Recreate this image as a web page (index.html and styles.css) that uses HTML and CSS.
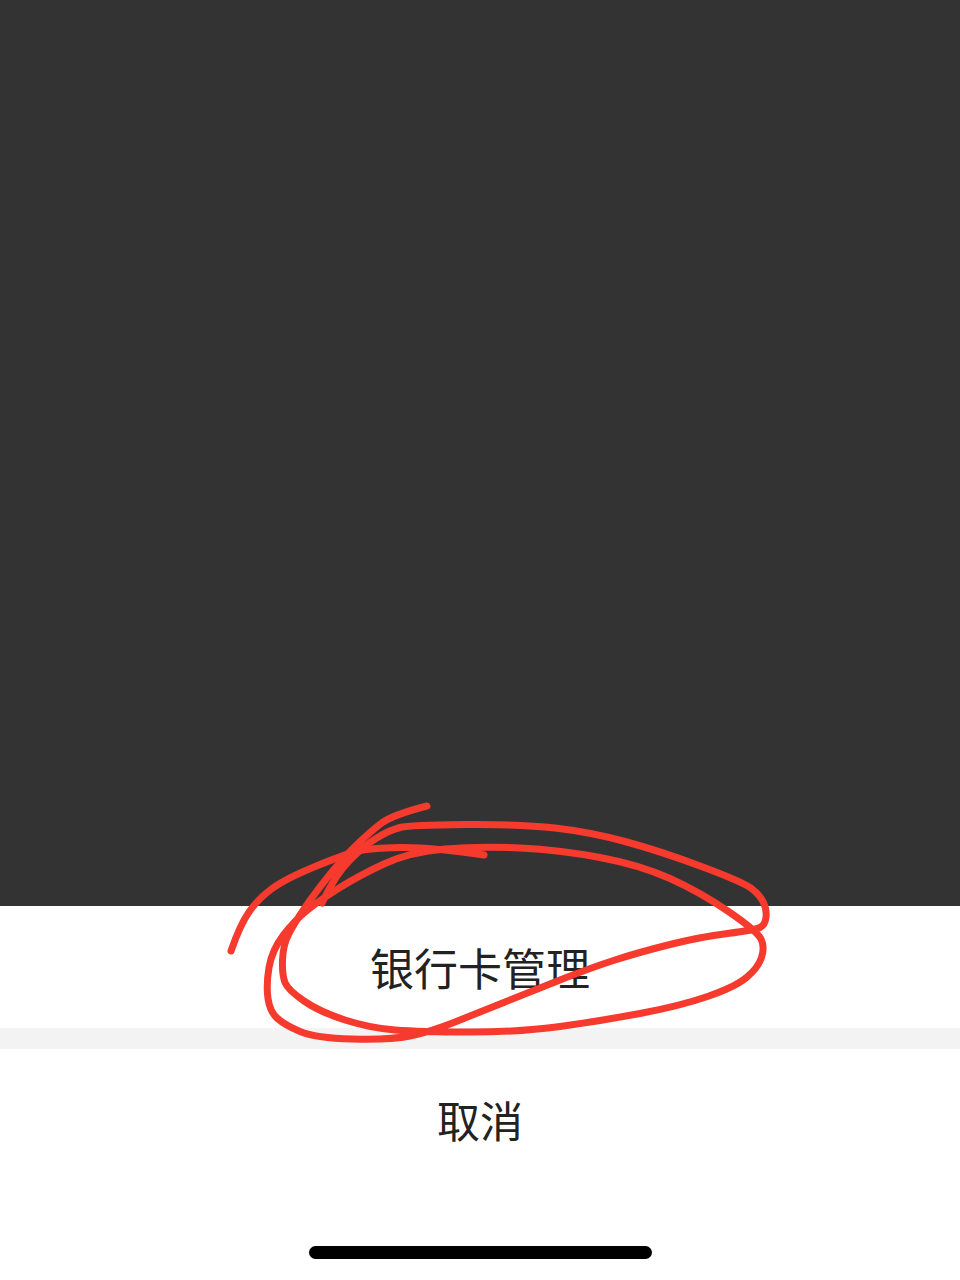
FILE: index.html
```html
<!DOCTYPE html>
<html lang="zh-CN">
<head>
    <meta charset="UTF-8">
    <meta name="viewport" content="width=device-width, initial-scale=1.0">
    <title>银行卡管理</title>
    <link rel="stylesheet" href="styles.css">
</head>
<body>
    <div class="page">
        <div class="backdrop"></div>
        <div class="sheet">
            <div class="sheet_item">银行卡管理</div>
            <div class="sheet_gap"></div>
            <div class="sheet_cancel">取消</div>
            <div class="home_bar"></div>
        </div>

        <!-- red scribble drawn over the screenshot -->
        <svg class="scribble" viewBox="0 0 960 1280" width="960" height="1280">
            <path d="M231 951 Q240 925 249 912 Q258 899 271.5 889 Q285 879 314 867 Q343 855 356.5 851.5 Q370 848 400 847.5 Q430 847 484 855"/>
            <path d="M427 806 Q392 815 381 823.5 Q370 832 356.5 845 Q343 858 329 875.5 Q315 893 305 907.5 Q295 922 289 933.5 Q283 945 282.5 960 Q282 975 285 982.5 Q288 990 304 1001 Q320 1012 345 1020 Q370 1028 395 1030 Q420 1032 470 1032 Q520 1032 560 1026.5 Q600 1021 640 1013.5 Q680 1006 707.5 996.5 Q735 987 746.5 977.5 Q758 968 761.5 957.5 Q765 947 761 939 Q757 931 728.5 911.5 Q700 892 670 878.5 Q640 865 600 857.5 Q560 850 520 848 Q480 846 445 849 Q410 852 385 863.5 Q360 875 340 887.5 Q320 900 307.5 910 Q295 920 283.5 935 Q272 950 269 967.5 Q266 985 268 998.5 Q270 1012 277.5 1018.5 Q285 1025 300 1031.5 Q315 1038 352.5 1039 Q390 1040 410 1036 Q430 1032 455 1022 Q480 1012 505 1002 Q530 992 560 980 Q590 968 615 960 Q640 952 670 944.5 Q700 937 727.5 933.5 Q755 930 760 927.5 Q765 925 766 917.5 Q767 910 763.5 902.5 Q760 895 751.5 888.5 Q743 882 701.5 866.5 Q660 851 625 841.5 Q590 832 555 828 Q520 824 465 824.5 Q410 825 400 827.5 Q390 830 377.5 837.5 Q365 845 350 860 Q335 875 322 903"/>
        </svg>
    </div>
</body>
</html>
```

FILE: styles.css
```css
* {
    box-sizing: border-box;
}

body {
    margin: 0;
    font-family: "Noto Sans CJK SC", "Liberation Sans", sans-serif;
    color: #222;
}

.page {
    position: relative;
    width: 960px;
    height: 1280px;
    display: flex;
    flex-direction: column;
    overflow: hidden;
}

.backdrop {
    height: 906px;
    background-color: #333;
}

.sheet {
    flex: 1;
    display: flex;
    flex-direction: column;
    background-color: #fff;
}

.sheet_item {
    height: 122px;
    display: flex;
    align-items: center;
    justify-content: center;
    font-size: 44px;
}

.sheet_gap {
    height: 21px;
    background-color: #f3f3f3;
}

.sheet_cancel {
    height: 146px;
    padding-bottom: 6px;
    display: flex;
    align-items: center;
    justify-content: center;
    font-size: 43px;
}

.home_bar {
    width: 343px;
    height: 13px;
    margin: 51px auto 0;
    border-radius: 7px;
    background-color: #000;
}

.scribble {
    position: absolute;
    top: 0;
    left: 0;
    fill: none;
    stroke: #f63a2e;
    stroke-width: 7;
    stroke-linecap: round;
    stroke-linejoin: round;
}
```
